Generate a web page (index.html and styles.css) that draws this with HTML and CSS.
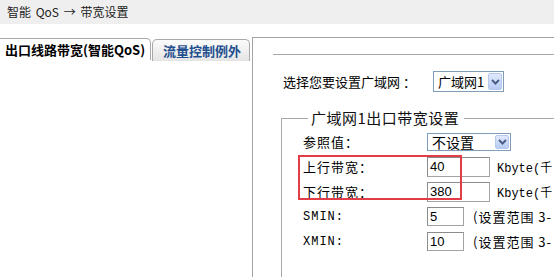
FILE: index.html
```html
<!DOCTYPE html>
<html lang="zh-CN">

<head>
    <meta charset="UTF-8">
    <title>带宽设置</title>
    <link rel="stylesheet" href="styles.css">
</head>

<body>

    <div class="crumb">智能 QoS → 带宽设置</div>

    <div class="main">
        <div class="tabs">
            <div class="tab tab-on">出口线路带宽(智能QoS)</div>
            <div class="tab tab-off">流量控制例外</div>
        </div>

        <div class="panel">
            <div class="rule"></div>

            <div class="wan">
                <span class="wan-label">选择您要设置广域网 ：</span>
                <div class="select select-wan">
                    <span>广域网1</span>
                    <i class="arrow"><svg width="9" height="6" viewBox="0 0 9 6"><polyline points="1,1 4.5,4.5 8,1" fill="none" stroke="#4a5f88" stroke-width="2"/></svg></i>
                </div>
            </div>

            <fieldset class="box">
                <legend>广域网1出口带宽设置</legend>

                <div class="row">
                    <label>参照值：</label>
                    <div class="select select-ref">
                        <span>不设置</span>
                        <i class="arrow"><svg width="9" height="6" viewBox="0 0 9 6"><polyline points="1,1 4.5,4.5 8,1" fill="none" stroke="#4a5f88" stroke-width="2"/></svg></i>
                    </div>
                </div>

                <div class="hl">
                    <div class="row">
                        <label>上行带宽：</label>
                        <input class="field" type="text" value="40">
                        <span class="unit mono">Kbyte(千</span>
                    </div>
                    <div class="row">
                        <label>下行带宽：</label>
                        <input class="field" type="text" value="380">
                        <span class="unit mono">Kbyte(千</span>
                    </div>
                    <div class="mark"></div>
                </div>

                <div class="row">
                    <label class="mono">SMIN:</label>
                    <input class="field field-sm" type="text" value="5">
                    <span class="unit unit-range">(设置范围 3-</span>
                </div>
                <div class="row">
                    <label class="mono">XMIN:</label>
                    <input class="field field-sm" type="text" value="10">
                    <span class="unit unit-range">(设置范围 3-</span>
                </div>
            </fieldset>
        </div>
    </div>

</body>

</html>
```

FILE: styles.css
```css
/* page */
body {
    margin: 0;
    height: 277px;
    overflow: hidden;
    font-family: "Noto Sans CJK SC", sans-serif;
    font-size: 13px;
    color: #000;
    background: #fff;
}

.mono {
    font-family: "Liberation Mono", "Noto Sans CJK SC", monospace;
    font-size: 12px;
}

/* breadcrumb bar */
.crumb {
    height: 24px;
    line-height: 24px;
    padding-left: 7px;
    font-size: 12px;
    word-spacing: 2px;
    color: #222;
    background: #efefef;
}

.main {
    display: flex;
    margin-top: 13px;
    height: 240px;
}

/* tabs */
.tabs {
    width: 252px;
    display: flex;
    align-items: flex-start;
    flex-shrink: 0;
}

.tab {
    height: 21px;
    line-height: 21px;
    font-size: 13px;
    font-weight: bold;
    white-space: nowrap;
    border: 1px solid #a9a9a9;
    border-bottom: none;
    border-radius: 5px 5px 0 0;
}

.tab-on {
    width: 145px;
    padding-left: 5px;
    margin-top: 1px;
    border-left: none;
    border-radius: 0 5px 0 0;
    background: #fff;
}

.tab-off {
    width: 86px;
    padding-left: 10px;
    margin: 2px 0 0 1px;
    color: #1f4f8f;
    background: linear-gradient(#fbfbfb, #e4e4e4);
}

/* right panel */
.panel {
    flex: 1;
    min-width: 0;
    overflow: hidden;
    padding-left: 20px;
    border-left: 1px solid #a4a4a4;
    border-top: 1px solid #a4a4a4;
}

.rule {
    margin-top: 16px;
    border-top: 1px solid #a8a8a8;
}

.wan {
    display: flex;
    align-items: center;
    height: 21px;
    margin: 16px 0 0 10px;
}

.wan-label {
    width: 150px;
}

/* fake select boxes */
.select {
    display: flex;
    align-items: center;
    box-sizing: border-box;
    padding-left: 4px;
    border: 1px solid #7f9db9;
    background: #fff;
}

.select-wan {
    width: 71px;
    height: 21px;
}

.select-ref {
    width: 84px;
    height: 18px;
    font-size: 14px;
}

.arrow {
    margin-left: auto;
    margin-right: 1px;
    width: 14px;
    height: calc(100% - 2px);
    box-sizing: border-box;
    display: flex;
    align-items: center;
    justify-content: center;
    border: 1px solid #b8c9ee;
    border-radius: 2px;
    background: linear-gradient(#e1eafc, #b7cbf4);
}

/* bandwidth group */
.box {
    margin: 16px 0 0 8px;
    padding: 1px 0 30px 21px;
    min-width: 0;
    border: 1px solid #a8a8a8;
    border-right: none;
    border-bottom: none;
}

.box legend {
    margin-left: 5px;
    padding: 0 5px 0 3px;
    line-height: 20px;
    font-size: 15px;
    letter-spacing: 0.5px;
    color: #111;
}

.row {
    display: flex;
    align-items: center;
    height: 25px;
    white-space: nowrap;
}

.row label {
    width: 124px;
    flex-shrink: 0;
    letter-spacing: 1px;
}

.field {
    width: 63px;
    height: 20px;
    box-sizing: border-box;
    flex-shrink: 0;
    margin: 0;
    padding: 0 2px;
    font-family: "Liberation Sans", sans-serif;
    font-size: 13px;
    border: 1px solid #a3a3a3;
    border-top-color: #8c8c8c;
    border-left-color: #8c8c8c;
}

.field-sm {
    width: 37px;
    height: 19px;
}

.unit {
    margin-left: 7px;
}

.unit-range {
    margin-left: 9px;
    letter-spacing: 1px;
}

/* red highlight over the two bandwidth rows */
.hl {
    position: relative;
}

.mark {
    position: absolute;
    left: -5px;
    top: 1px;
    width: 164px;
    height: 45px;
    box-sizing: border-box;
    border: 2px solid #e23c46;
}
```
